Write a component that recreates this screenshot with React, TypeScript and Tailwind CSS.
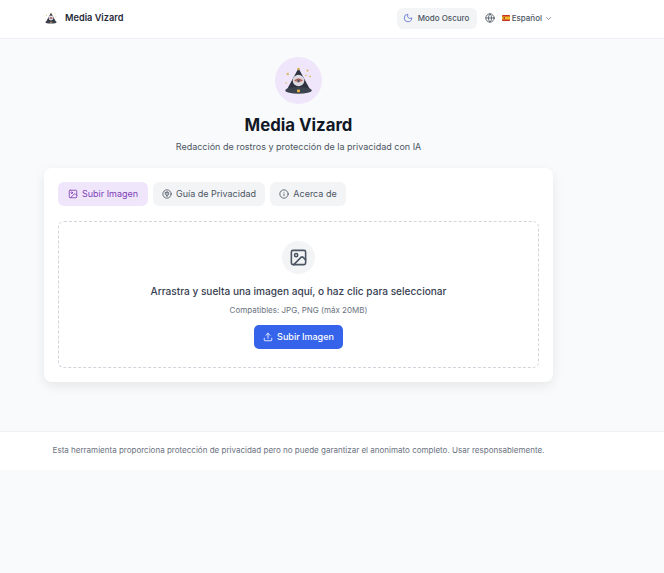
import React from "react";
import { Moon, Globe, ChevronDown, Image as ImageIcon, Info, Upload } from "lucide-react";

function Logo({ size }: { size: number }) {
  return (
    <svg width={size} height={size} viewBox="0 0 40 40" fill="none">
      <g fill="#dcb765">
        <circle cx="7" cy="12" r="1.5" />
        <circle cx="31" cy="8" r="1.3" />
        <circle cx="34" cy="15" r="1.1" />
        <circle cx="29" cy="14" r="0.9" />
        <circle cx="5" cy="23" r="1" />
      </g>
      <path d="M20 5 L34 31 H6 Z" fill="#2f3340" />
      <ellipse cx="20" cy="32" rx="16" ry="4" fill="#3d424f" />
      <circle cx="20" cy="6" r="1.5" fill="#d9a94a" />
      <circle cx="20" cy="20" r="7" fill="#dcdae2" />
      <path d="M14 20 Q20 14.5 26 20 Q20 25 14 20Z" fill="#d99a90" />
      <path d="M16 20 Q20 17 24 20" stroke="#7a3f3f" strokeWidth="1" />
      <circle cx="20" cy="20.5" r="1.5" fill="#4a4f5c" />
      <rect x="18.2" y="31" width="3.6" height="3.2" rx="0.8" fill="#e3b341" />
    </svg>
  );
}

function Flag() {
  return (
    <svg width="8" height="6" viewBox="0 0 8 6" className="shrink-0">
      <rect width="8" height="6" rx="0.8" fill="#c8301e" />
      <rect y="1.5" width="8" height="3" fill="#f2bd2e" />
      <rect x="1.5" y="2" width="1.5" height="2" fill="#a5502a" />
    </svg>
  );
}

function PrivacyIcon() {
  return (
    <svg width="10" height="10" viewBox="0 0 24 24" fill="none" stroke="currentColor" strokeWidth="2" strokeLinecap="round" strokeLinejoin="round">
      <circle cx="12" cy="12" r="10" />
      <path d="M8 8.5 12 7l4 1.5V12c0 2.5-1.8 4-4 5-2.2-1-4-2.5-4-5Z" />
      <path d="M12 7v10" />
    </svg>
  );
}

function Tab({ icon, label, active, className }: { icon: React.ReactNode; label: string; active?: boolean; className: string }) {
  const tone = active ? "bg-[#f0e6fb] text-[#7e3fb5]" : "bg-[#f3f4f6] text-[#4b5563]";
  return (
    <div className={`flex h-[24px] items-center justify-center gap-[4px] rounded-[6px] text-[9px] ${tone} ${className}`}>
      {icon}
      <span>{label}</span>
    </div>
  );
}

export default function App() {
  return (
    <div className="flex min-h-[573px] flex-col bg-[#f9fafb] font-['Inter',sans-serif]">
      <header className="h-[39px] border-b border-[#eceef1] bg-white">
        <div className="flex h-[36px] w-[597px] items-center justify-between px-[44px]">
          <div className="flex items-center gap-[7px]">
            <Logo size={14} />
            <span className="text-[9.2px] font-semibold text-[#1f2937]">Media Vizard</span>
          </div>
          <div className="flex items-center">
            <div className="flex h-[21px] w-[80px] items-center gap-[5px] rounded-[6px] bg-[#f3f4f6] pl-[6px] text-[8px] font-medium text-[#4b5563]">
              <Moon size={10} className="text-[#5b6fd6]" />
              <span>Modo Oscuro</span>
            </div>
            <Globe size={10} className="ml-[8px] text-[#4b5563]" />
            <div className="ml-[7px] flex items-center gap-[2px] text-[8px] font-medium text-[#4b5563]">
              <Flag />
              <span>Español</span>
              <ChevronDown size={9} className="text-[#6b7280]" />
            </div>
          </div>
        </div>
      </header>

      <main className="flex w-[597px] flex-col items-center px-[44px] pt-[18px]">
        <div className="flex h-[47px] w-[47px] items-center justify-center rounded-full bg-[#f0e6fb]">
          <Logo size={33} />
        </div>
        <h1 className="mt-[9px] text-[16.8px] leading-[24px] font-bold text-[#111827]">Media Vizard</h1>
        <p className="mt-[2px] text-[9px] leading-[16px] text-[#4b5563]">
          Redacción de rostros y protección de la privacidad con IA
        </p>

        <section className="mt-[13px] w-full rounded-[8px] bg-white p-[14px] shadow-[0_4px_12px_rgba(0,0,0,0.08)]">
          <div className="flex gap-[5px]">
            <Tab active className="w-[90px]" icon={<ImageIcon size={10} />} label="Subir Imagen" />
            <Tab className="w-[112px]" icon={<PrivacyIcon />} label="Guía de Privacidad" />
            <Tab className="w-[76px]" icon={<Info size={10} />} label="Acerca de" />
          </div>
          <div className="mt-[15px] flex h-[147px] flex-col items-center rounded-[6px] border border-dashed border-[#d1d5db] pt-[19px]">
            <div className="flex h-[33px] w-[33px] items-center justify-center rounded-full bg-[#f3f4f6]">
              <ImageIcon size={19} className="text-[#4b5563]" />
            </div>
            <p className="mt-[9px] text-[10.1px] leading-[16px] font-medium text-[#374151]">
              Arrastra y suelta una imagen aquí, o haz clic para seleccionar
            </p>
            <p className="mt-[4px] text-[8px] leading-[14px] text-[#6b7280]">Compatibles: JPG, PNG (máx 20MB)</p>
            <div className="mt-[8px] flex h-[24px] w-[89px] items-center justify-center gap-[4px] rounded-[5px] bg-[#3563e9] text-[9px] font-medium text-white">
              <Upload size={10} />
              <span>Subir Imagen</span>
            </div>
          </div>
        </section>
      </main>

      <footer className="mt-[49px] h-[39px] border-t border-[#f0f1f3] bg-white">
        <div className="flex h-[37px] w-[597px] items-center justify-center text-[8.03px] text-[#6b7280]">
          Esta herramienta proporciona protección de privacidad pero no puede garantizar el anonimato completo. Usar responsablemente.
        </div>
      </footer>
    </div>
  );
}
